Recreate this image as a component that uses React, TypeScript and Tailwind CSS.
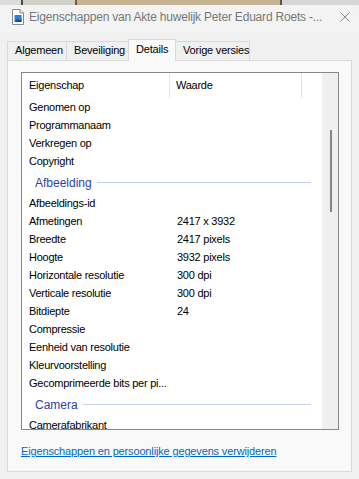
import React from 'react';

type Row = { kind: 'item'; name: string; value?: string } | { kind: 'group'; name: string };

const rows: Row[] = [
  { kind: 'item', name: 'Genomen op' },
  { kind: 'item', name: 'Programmanaam' },
  { kind: 'item', name: 'Verkregen op' },
  { kind: 'item', name: 'Copyright' },
  { kind: 'group', name: 'Afbeelding' },
  { kind: 'item', name: 'Afbeeldings-id' },
  { kind: 'item', name: 'Afmetingen', value: '2417 x 3932' },
  { kind: 'item', name: 'Breedte', value: '2417 pixels' },
  { kind: 'item', name: 'Hoogte', value: '3932 pixels' },
  { kind: 'item', name: 'Horizontale resolutie', value: '300 dpi' },
  { kind: 'item', name: 'Verticale resolutie', value: '300 dpi' },
  { kind: 'item', name: 'Bitdiepte', value: '24' },
  { kind: 'item', name: 'Compressie' },
  { kind: 'item', name: 'Eenheid van resolutie' },
  { kind: 'item', name: 'Kleurvoorstelling' },
  { kind: 'item', name: 'Gecomprimeerde bits per pi...' },
  { kind: 'group', name: 'Camera' },
  { kind: 'item', name: 'Camerafabrikant' },
];

function FileIcon() {
  return (
    <svg width="12" height="16" viewBox="0 0 12 16" className="shrink-0">
      <path d="M0.5 0.5h7.5l3.5 3.5v11.5h-11z" fill="#fff" stroke="#8a8a8a" />
      <path d="M8 0.5v3.5h3.5" fill="#e8e8e8" stroke="#8a8a8a" />
      <rect x="2.5" y="6" width="7" height="7" fill="#2f7fd8" />
      <path d="M2.5 13l3-3.5 2 2 2-2.5v4z" fill="#0d4fa8" />
    </svg>
  );
}

function Tab({ label, width, active }: { label: string; width: string; active?: boolean }) {
  if (active) {
    return (
      <div className={`${width} h-[22px] pl-[7px] -mb-px z-10 flex items-start pt-[4px] whitespace-nowrap bg-[#f9f9f9] border border-b-0 border-[#d9d9d9] text-black`}>
        {label}
      </div>
    );
  }
  return (
    <div className={`${width} h-[19px] pl-[7px] flex items-start pt-[3px] whitespace-nowrap bg-[#f0f0f0] border border-b-0 border-[#d9d9d9] text-black`}>
      {label}
    </div>
  );
}

export default function App() {
  return (
    <div className="w-[359px] h-[479px] overflow-hidden bg-[#f0f0f0] font-['Segoe_UI','Liberation_Sans',sans-serif] text-[11px] tracking-[-0.25px] leading-none">
      {/* desktop behind the window */}
      <div className="h-[5px] flex bg-[#9d9d9d]">
        <div className="w-[21px] bg-[#dcdcdc]" />
        <div className="w-[2px] bg-[#4a4a4a]" />
        <div className="w-[52px] bg-[#d3d0c8]" />
        <div className="w-[2px] bg-[#6b5f4c]" />
        <div className="w-[203px] bg-[#c4b494]" />
        <div className="w-[2px] bg-[#5d5446]" />
        <div className="flex-1 bg-[#d6d6d6]" />
      </div>

      <div className="rounded-t-[7px] bg-[#f0f0f0] h-[474px] flex flex-col">
        {/* title bar */}
        <div className="h-[27px] rounded-t-[7px] bg-[#f3f3f3] flex items-center pl-[12px] pr-[8px] pb-[3px]">
          <FileIcon />
          <div className="ml-[5px] flex-1 text-[#777777] text-[12px] tracking-[-0.2px] whitespace-nowrap">
            Eigenschappen van Akte huwelijk Peter Eduard Roets -...
          </div>
          <svg width="10" height="10" viewBox="0 0 10 10" className="mr-[1px]">
            <path d="M0.5 0.5l9 9M9.5 0.5l-9 9" stroke="#8c8c8c" strokeWidth="1" />
          </svg>
        </div>

        {/* tabs */}
        <div className="h-[28px] flex items-end pl-[7px] tracking-[-0.2px]">
          <Tab label="Algemeen" width="w-[60px]" />
          <div className="-ml-px flex items-end">
            <Tab label="Beveiliging" width="w-[63px]" />
          </div>
          <div className="-ml-px flex items-end">
            <Tab label="Details" width="w-[48px]" active />
          </div>
          <div className="-ml-px flex items-end">
            <Tab label="Vorige versies" width="w-[75px]" />
          </div>
        </div>

        {/* tab panel */}
        <div className="mx-[7px] h-[412px] border border-[#d9d9d9] bg-[#f9f9f9] pt-[11px] pl-[13px] pr-[13px]">
          <div className="w-[318px] h-[358px] border border-[#828790] bg-white flex overflow-hidden">
            <div className="flex-1 overflow-hidden">
              <div className="h-[25px] flex items-center">
                <div className="w-[148px] h-full flex items-center pl-[7px] border-r border-[#e5e5e5] text-black">
                  Eigenschap
                </div>
                <div className="w-[132px] h-full flex items-center pl-[6px] border-r border-[#e5e5e5] text-black">
                  Waarde
                </div>
              </div>
              {rows.map((r, i) =>
                r.kind === 'group' ? (
                  <div key={i} className="h-[24px] flex items-center pl-[13px] pr-[11px] pt-[1px]">
                    <span className="text-[12px] tracking-normal text-[#2d3fa8]">{r.name}</span>
                    <div className="flex-1 ml-[5px] h-px bg-[#c2d0ec]" />
                  </div>
                ) : (
                  <div key={i} className="h-[18px] flex items-center text-black">
                    <div className="w-[149px] pl-[7px] whitespace-nowrap">{r.name}</div>
                    <div className="pl-[6px] whitespace-nowrap">{r.value}</div>
                  </div>
                )
              )}
            </div>
            {/* scrollbar */}
            <div className="w-[16px] bg-[#efefef] flex justify-center pl-px">
              <div className="mt-[57px] w-[2px] h-[82px] bg-[#858585]" />
            </div>
          </div>

          <div className="mt-[16px] text-[#0066cc] underline tracking-[-0.15px] whitespace-nowrap">
            Eigenschappen en persoonlijke gegevens verwijderen
          </div>
        </div>
      </div>
    </div>
  );
}
